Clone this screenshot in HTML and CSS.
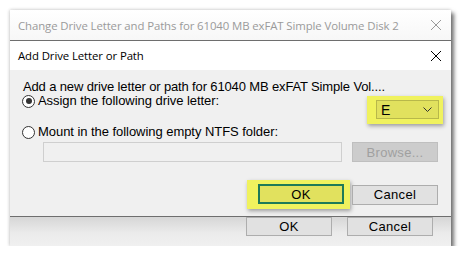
FILE: index.html
```html
<!DOCTYPE html>
<html>
<head>
<meta charset="utf-8">
<link rel="stylesheet" href="styles.css">
</head>
<body>
<div class="stage">
  <div class="back">
    <div class="back-title">
      <span class="back-title-text">Change Drive Letter and Paths for 61040 MB exFAT Simple Volume Disk 2</span>
      <svg class="x-icon" width="12" height="12" viewBox="0 0 12 12"><path d="M1 1 L11 11 M11 1 L1 11" stroke="#999" stroke-width="1"/></svg>
    </div>
    <div class="front">
      <div class="front-title">
        <span class="front-title-text">Add Drive Letter or Path</span>
        <svg class="x-icon" width="12" height="12" viewBox="0 0 12 12"><path d="M1 1 L11 11 M11 1 L1 11" stroke="#000" stroke-width="1"/></svg>
      </div>
      <div class="front-body">
        <div class="intro">Add a new drive letter or path for 61040 MB exFAT Simple Vol....</div>
        <div class="row-assign">
          <label class="radio-line"><span class="radio checked"></span>Assign the following drive letter:</label>
          <div class="hl hl-combo">
            <div class="combo"><span>E</span>
              <svg width="9" height="6" viewBox="0 0 9 6"><path d="M0.5 0.5 L4.5 4.5 L8.5 0.5" stroke="#333" fill="none" stroke-width="1"/></svg>
            </div>
          </div>
        </div>
        <label class="radio-line"><span class="radio"></span>Mount in the following empty NTFS folder:</label>
        <div class="row-path">
          <div class="path-field"></div>
          <div class="btn disabled">Browse...</div>
        </div>
        <div class="row-buttons">
          <div class="hl hl-ok"><div class="btn ok-front">OK</div></div>
          <div class="btn">Cancel</div>
        </div>
      </div>
    </div>
    <div class="back-footer">
      <div class="btn back-btn">OK</div>
      <div class="btn back-btn">Cancel</div>
    </div>
  </div>
</div>
</body>
</html>
```

FILE: styles.css
```css
html, body {
  margin: 0;
  padding: 0;
  background: #fff;
}
.stage {
  padding: 10px 0 0 10px;
  width: 441px;
}
.back {
  width: 441px;
  background: #f0f0f0;
  box-shadow: 3px 3px 4px rgba(0,0,0,0.55), -1px 0 3px rgba(0,0,0,0.12), 0 -1px 3px rgba(0,0,0,0.08);
}
.back-title {
  height: 30px;
  background: linear-gradient(#ffffff, #f7f7f7);
  display: flex;
  align-items: center;
  justify-content: space-between;
  padding: 0 9px 0 8px;
  box-sizing: border-box;
}
.back-title-text {
  font-family: "Open Sans", "Noto Sans", sans-serif;
  font-size: 11.4px;
  color: #9a9a9a;
  letter-spacing: -0.1px;
}
.front {
  border-top: 1px solid #6e6e6e;
  border-bottom: 1px solid #6e6e6e;
  background: #f0f0f0;
}
.front-title {
  height: 29px;
  background: #fff;
  display: flex;
  align-items: center;
  justify-content: space-between;
  padding: 0 9px 0 8px;
  box-sizing: border-box;
}
.front-title-text {
  font-family: "Open Sans", "Noto Sans", sans-serif;
  font-size: 11.4px;
  color: #000;
  letter-spacing: -0.1px;
}
.x-icon {
  display: block;
}
.front-body {
  height: 146px;
  box-sizing: border-box;
  padding: 9px 13px 0 12px;
  font-family: "Liberation Sans", Arial, sans-serif;
  font-size: 13px;
  color: #000;
}
.intro {
  height: 16px;
  line-height: 16px;
  margin-left: 1px;
  letter-spacing: -0.14px;
}
.row-assign {
  display: flex;
  justify-content: space-between;
  align-items: flex-start;
  height: 31px;
  margin-top: -2px;
}
.radio-line {
  display: flex;
  align-items: center;
  height: 16px;
  line-height: 16px;
  gap: 3px;
  letter-spacing: -0.05px;
}
.radio {
  width: 11px;
  height: 11px;
  border: 1px solid #333;
  border-radius: 50%;
  background: #fff;
  position: relative;
  flex: none;
}
.radio.checked::after {
  content: "";
  position: absolute;
  left: 2.5px;
  top: 2.5px;
  width: 6px;
  height: 6px;
  border-radius: 50%;
  background: #333;
}
.hl {
  background: #f0f25e;
  box-shadow: 1px 2px 4px rgba(0,0,0,0.35);
}
.hl-combo {
  margin-top: 3px;
  margin-right: -5px;
  padding: 4px 4px 5px 9px;
}
.combo {
  width: 51px;
  height: 17px;
  border: 1px solid #b8b84a;
  background: #e1e15e;
  display: flex;
  align-items: center;
  justify-content: space-between;
  padding: 0 6px 0 4px;
  box-sizing: content-box;
  font-size: 13px;
}
.combo span {
  font-size: 14px;
}
.row-path {
  display: flex;
  align-items: center;
  margin-top: 2px;
  padding-left: 21px;
  height: 20px;
}
.path-field {
  width: 297px;
  height: 18px;
  border: 1px solid #cfcfcf;
  background: #f0f0f0;
}
.btn {
  width: 84px;
  height: 18px;
  border: 1px solid #adadad;
  background: #e1e1e1;
  display: flex;
  align-items: center;
  justify-content: center;
  font-family: "Liberation Sans", Arial, sans-serif;
  font-size: 13px;
  color: #000;
  letter-spacing: 0.3px;
}
.btn.disabled {
  margin-left: 10px;
  background: #cccccc;
  border-color: #bfbfbf;
  color: #a0a0a0;
}
.row-buttons {
  display: flex;
  justify-content: flex-end;
  align-items: center;
  margin-top: 18px;
}
.hl-ok {
  padding: 4px 6px 5px 11px;
  margin-right: 2px;
}
.btn.ok-front {
  border: 2px solid #1e7a58;
  width: 82px;
  height: 16px;
  background: #e1e15e;
}
.back-footer {
  height: 29px;
  background: linear-gradient(#d6d6d6, #ebebeb 55%, #f0f0f0);
  display: flex;
  justify-content: flex-end;
  gap: 15px;
  padding-right: 18px;
}
.back-btn {
  height: 17px;
}
```
